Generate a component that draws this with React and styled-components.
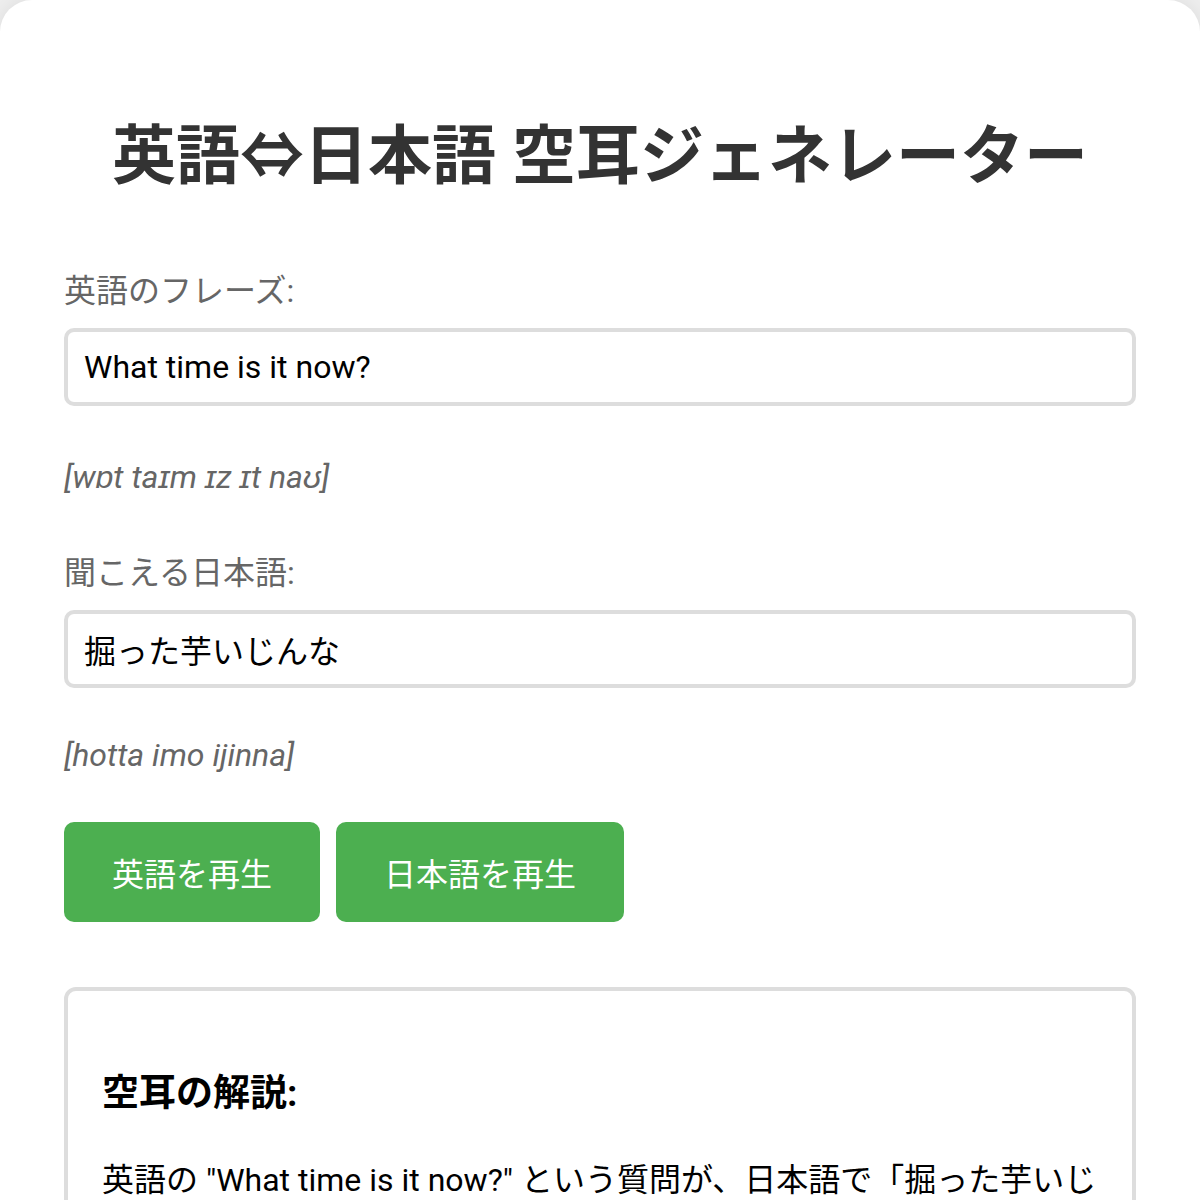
import React from "react";
import styled, { createGlobalStyle } from "styled-components";

const Global = createGlobalStyle`
  html, body { margin: 0; padding: 0; background: #eeeeee; }
  body { font-family: Roboto, "Noto Sans CJK JP", sans-serif; }
`;

const Card = styled.div`
  background: #ffffff;
  border-radius: 32px;
  box-shadow: 0 0 20px rgba(0, 0, 0, 0.08);
  padding: 40px 64px 80px;
  min-height: 1300px;
  box-sizing: border-box;
`;

const Title = styled.h1`
  margin: 79px 0 73px;
  font-size: 64px;
  line-height: 76px;
  font-weight: 700;
  color: #333333;
  text-align: center;
  white-space: nowrap;
`;

const Label = styled.label`
  display: block;
  font-size: 32px;
  line-height: 46px;
  color: #666666;
  margin-bottom: 14px;
`;

const TextInput = styled.input`
  display: block;
  width: 100%;
  height: 78px;
  box-sizing: border-box;
  border: 4px solid #dddddd;
  border-radius: 10px;
  padding: 0 16px;
  font-family: Roboto, "Noto Sans CJK JP", sans-serif;
  font-size: 32px;
  color: #000000;
  background: #ffffff;
  outline: none;
`;

const Phonetic = styled.p`
  margin: ${(p) => p.$before}px 0 ${(p) => p.$after}px;
  font-size: 32px;
  line-height: 46px;
  font-style: italic;
  color: #666666;
`;

const ButtonRow = styled.div`
  display: flex;
  gap: 16px;
  margin-bottom: 65px;
`;

const PlayButton = styled.button`
  height: 100px;
  padding: 0 48px;
  border: none;
  border-radius: 10px;
  background: #4caf50;
  color: #ffffff;
  font-family: Roboto, "Noto Sans CJK JP", sans-serif;
  font-size: 32px;
  cursor: pointer;
`;

const ExplainBox = styled.section`
  border: 4px solid #dddddd;
  border-radius: 12px;
  padding: 34px;
`;

const ExplainTitle = styled.h3`
  margin: 47px 0 41px;
  font-size: 37px;
  line-height: 44px;
  font-weight: 700;
  color: #000000;
`;

const ExplainText = styled.p`
  margin: 0;
  font-size: 32px;
  line-height: 46px;
  color: #000000;
`;

export default function App() {
  return (
    <>
      <Global />
      <Card>
        <Title>英語⇔日本語 空耳ジェネレーター</Title>
        <Label>英語のフレーズ:</Label>
        <TextInput defaultValue="What time is it now?" />
        <Phonetic $before={48} $after={50}>[wɒt taɪm ɪz ɪt naʊ]</Phonetic>
        <Label>聞こえる日本語:</Label>
        <TextInput defaultValue="掘った芋いじんな" />
        <Phonetic $before={44} $after={44}>[hotta imo ijinna]</Phonetic>
        <ButtonRow>
          <PlayButton>英語を再生</PlayButton>
          <PlayButton>日本語を再生</PlayButton>
        </ButtonRow>
        <ExplainBox>
          <ExplainTitle>空耳の解説:</ExplainTitle>
          <ExplainText>
            英語の "What time is it now?" という質問が、日本語で「掘った芋いじんな」と聞こえることから生まれた有名な空耳です。
          </ExplainText>
        </ExplainBox>
      </Card>
    </>
  );
}
